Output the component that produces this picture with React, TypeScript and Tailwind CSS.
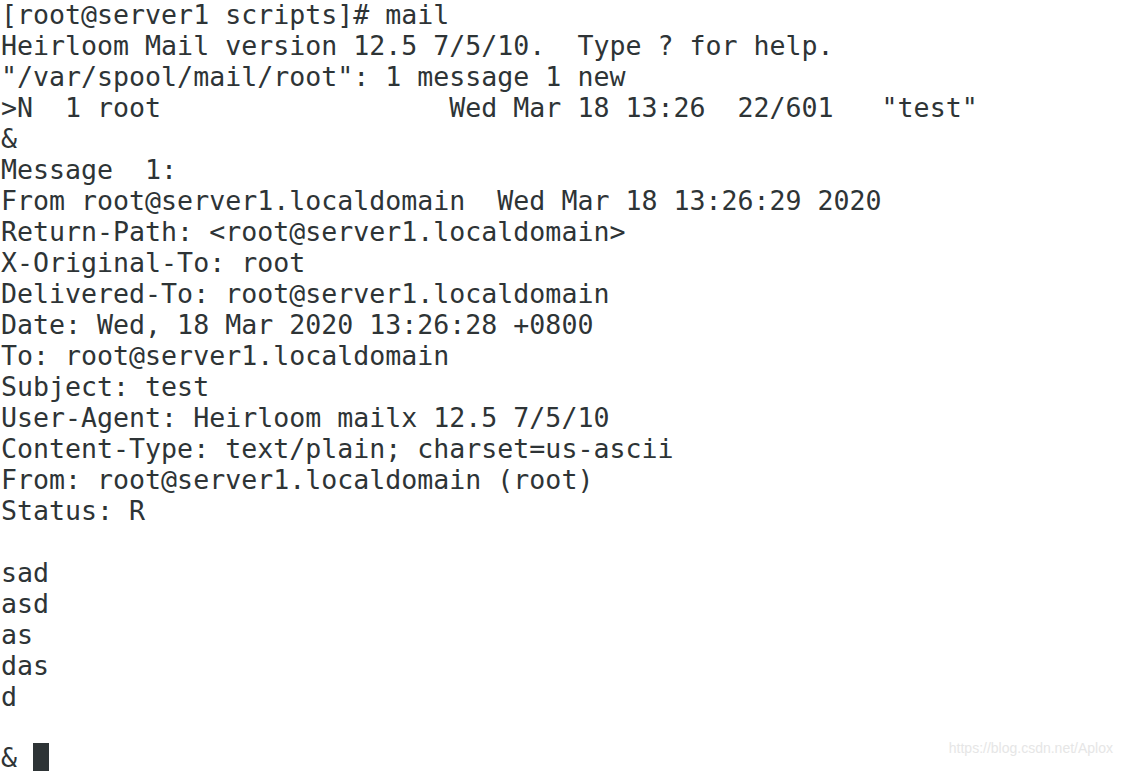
const lines = [
  '[root@server1 scripts]# mail',
  'Heirloom Mail version 12.5 7/5/10.  Type ? for help.',
  '"/var/spool/mail/root": 1 message 1 new',
  '>N  1 root                  Wed Mar 18 13:26  22/601   "test"',
  '&',
  'Message  1:',
  'From root@server1.localdomain  Wed Mar 18 13:26:29 2020',
  'Return-Path: <root@server1.localdomain>',
  'X-Original-To: root',
  'Delivered-To: root@server1.localdomain',
  'Date: Wed, 18 Mar 2020 13:26:28 +0800',
  'To: root@server1.localdomain',
  'Subject: test',
  'User-Agent: Heirloom mailx 12.5 7/5/10',
  'Content-Type: text/plain; charset=us-ascii',
  'From: root@server1.localdomain (root)',
  'Status: R',
  '',
  'sad',
  'asd',
  'as',
  'das',
  'd',
  '',
]

export default function App() {
  return (
    <div className="relative h-[771px] w-[1124px] overflow-hidden bg-white text-[#2e3436]">
      <div className="-mt-[1px] pl-[1px] whitespace-pre font-['DejaVu_Sans_Mono',monospace] text-[26.6px] leading-[31px]">
        {lines.map((l, i) => (
          <div key={i} className="h-[31px]">
            {l}
          </div>
        ))}
        <div className="flex h-[29px] items-end leading-[29px]">
          <span>& </span>
          <span className="mb-[1px] inline-block h-[28px] w-[16px] bg-[#2e3436]" />
        </div>
      </div>
      <div className="absolute bottom-[12px] right-[11px] font-['Liberation_Sans',sans-serif] text-[14px] text-[#e6e6e6]">
        https://blog.csdn.net/Aplox
      </div>
    </div>
  )
}
